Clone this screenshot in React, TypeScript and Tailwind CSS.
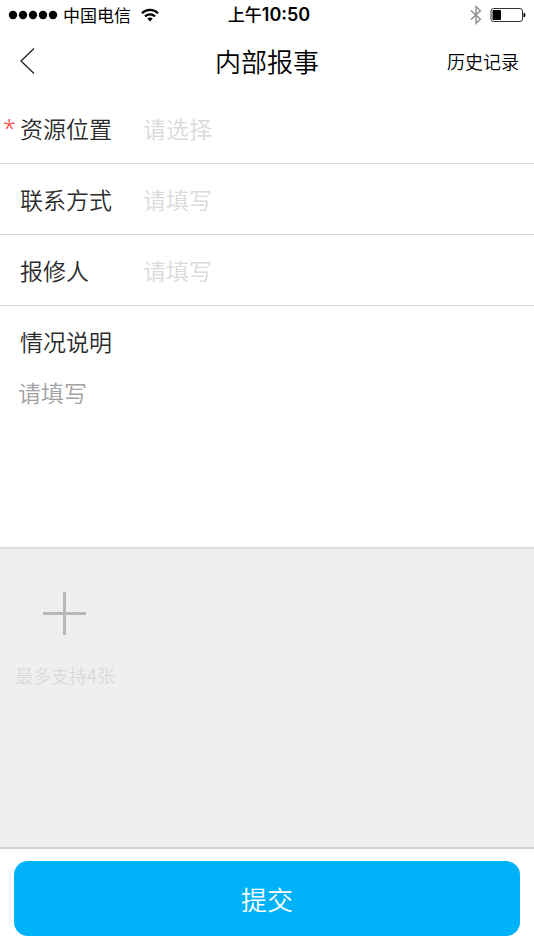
import { useState } from "react";
import clsx from "clsx";

type FieldProps = {
  id: string;
  label: string;
  placeholder: string;
  required?: boolean;
  value: string;
  onChange: (value: string) => void;
};

const fields = [
  { id: "location", label: "资源位置", placeholder: "请选择", required: true },
  { id: "contact", label: "联系方式", placeholder: "请填写" },
  { id: "reporter", label: "报修人", placeholder: "请填写" },
];

function StatusBar() {
  return (
    <div className="grid h-[29px] grid-cols-[1fr_auto_1fr] items-center px-2 text-[17px] font-normal">
      <div className="flex items-center">
        <svg width="50" height="10" viewBox="0 0 50 10" aria-hidden="true">
          {[5, 15, 25, 35, 45].map((cx) => (
            <circle key={cx} cx={cx} cy="5" r="4.2" />
          ))}
        </svg>
        <span className="ml-[5px] whitespace-nowrap">中国电信</span>
        <svg
          className="ml-[10px] shrink-0"
          width="18"
          height="14"
          viewBox="0 0 18 14"
          fill="none"
          stroke="#000"
          strokeWidth="2.2"
          aria-hidden="true"
        >
          <path d="M1 5.2C5.4 .7 12.6 .7 17 5.2" />
          <path d="M4 8.4C6.8 5.6 11.2 5.6 14 8.4" />
          <path d="M9 13.4 6.3 10.6Q9 8.4 11.7 10.6Z" fill="#000" stroke="none" />
        </svg>
      </div>
      <div className="pl-1 text-center font-medium">
        上午<span className="font-['Inter'] text-[18px] font-semibold">10:50</span>
      </div>
      <div className="flex items-center justify-end">
        <svg
          width="12"
          height="20"
          viewBox="0 0 12 20"
          fill="none"
          stroke="#8e8e8e"
          strokeWidth="1.4"
          aria-hidden="true"
        >
          <path d="M1 5.4 10.4 14.2 6 18.4V1.6L10.4 5.8 1 14.6" />
        </svg>
        <svg className="ml-2" width="36" height="16" viewBox="0 0 36 16" aria-hidden="true">
          <rect x="1" y="1.5" width="31.5" height="13" rx="2.5" fill="none" stroke="#333" />
          <rect x="2.5" y="3" width="8.5" height="10" rx="1" />
          <path d="M33.5 5.5Q35.5 6 35.5 8T33.5 10.5Z" />
        </svg>
      </div>
    </div>
  );
}

function Field({ id, label, placeholder, required, value, onChange }: FieldProps) {
  return (
    <div className="flex h-[71px] items-center border-b border-[#d9d9d9] pl-[3px] text-[23px]">
      <span
        className={clsx("w-[17px] font-['Noto_Sans'] text-[#ff3b3b]", !required && "invisible")}
        aria-hidden="true"
      >
        *
      </span>
      <label htmlFor={id} className="w-[123px] shrink-0">
        {label}
      </label>
      <input
        id={id}
        value={value}
        required={required}
        placeholder={placeholder}
        onChange={(e) => onChange(e.target.value)}
        className="h-full min-w-0 flex-1 outline-none placeholder:text-[#dadada]"
      />
    </div>
  );
}

export default function App() {
  const [values, setValues] = useState<Record<string, string>>({});

  const setValue = (id: string, value: string) =>
    setValues((prev) => ({ ...prev, [id]: value }));

  return (
    <div className="flex min-h-screen flex-col bg-white font-['Noto_Sans_CJK_SC',sans-serif] font-[350] text-black">
      <StatusBar />
      <header className="grid h-16 grid-cols-[1fr_auto_1fr] items-center px-[15px]">
        <button type="button" aria-label="返回" className="justify-self-start px-[5px]">
          <svg width="15" height="26" viewBox="0 0 15 26" fill="none" stroke="#222" strokeWidth="1.3">
            <path d="M14 .5 1 13 14 25.5" />
          </svg>
        </button>
        <h1 className="text-[26px] leading-[36px] font-[350]">内部报事</h1>
        <a href="#history" className="justify-self-end text-[18px]">
          历史记录
        </a>
      </header>
      <form className="flex flex-1 flex-col text-[#2b2b2b]" onSubmit={(e) => e.preventDefault()}>
        {fields.map((field) => (
          <Field
            key={field.id}
            {...field}
            value={values[field.id] ?? ""}
            onChange={(value) => setValue(field.id, value)}
          />
        ))}
        <label htmlFor="description" className="flex h-[71px] items-center pl-5 text-[23px]">
          情况说明
        </label>
        <textarea
          id="description"
          placeholder="请填写"
          value={values.description ?? ""}
          onChange={(e) => setValue("description", e.target.value)}
          className="h-[170px] resize-none px-[18px] text-[23px] leading-[31px] outline-none placeholder:text-[#a2a2a2]"
        />
        <div className="flex flex-1 flex-col items-start border-t-2 border-[#dedede] bg-[#efefef] px-[15px] pt-[42px]">
          <button type="button" aria-label="添加图片" className="px-[27px]">
            <svg width="45" height="45" viewBox="0 0 45 45" fill="none" stroke="#b8b8b8" strokeWidth="3">
              <path d="M22.5 1V44M1 22.5H44" />
            </svg>
          </button>
          <p className="mt-[26px] text-[18px] text-[#dadada]">最多支持4张</p>
        </div>
        <div className="border-t-2 border-[#d0d0d0] px-[14px] pt-3 pb-[14px]">
          <button
            type="submit"
            className="h-[75px] w-full rounded-[14px] bg-[#00b2f8] text-[26px] text-white"
          >
            提交
          </button>
        </div>
      </form>
    </div>
  );
}
